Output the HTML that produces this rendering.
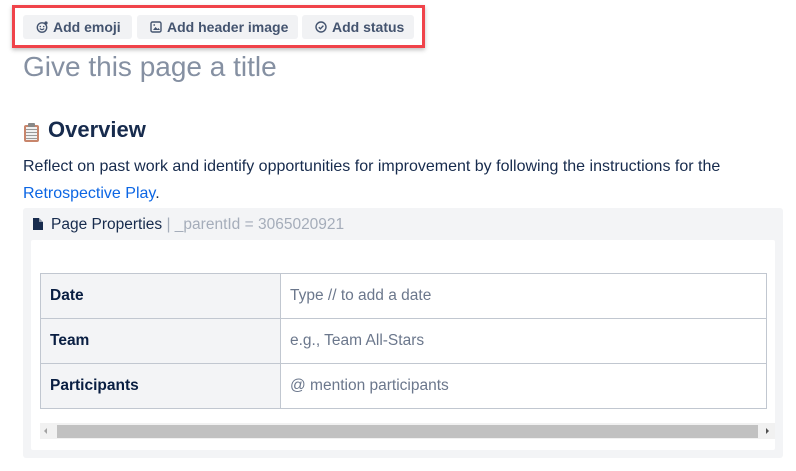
<!DOCTYPE html>
<html><head><meta charset="utf-8"><style>
*{margin:0;padding:0;box-sizing:border-box}
body{width:796px;height:471px;background:#fff;font-family:"Liberation Sans",sans-serif;position:relative;overflow:hidden;color:#172b4d}
.abs{position:absolute}
.red{left:12px;top:5px;width:413px;height:43px;border:3px solid #f0434a;box-shadow:0 2px 4px rgba(0,0,0,.25)}
.btn{position:absolute;top:15px;height:24px;background:#f1f2f4;border-radius:3px;font-size:14px;font-weight:bold;color:#44546f;line-height:24px;padding-left:12px;white-space:nowrap}
.btn svg{position:absolute;left:13px;top:6px}
.btn span{margin-left:18px}
.title{left:23px;top:51px;font-size:28px;color:#8590a2}
.h2{left:23px;top:117px;font-size:22px;font-weight:bold;color:#172b4d}
.p{left:23px;top:158px;font-size:16px;color:#172b4d}
.link{left:23px;top:185px;font-size:16px;color:#0c66e4}
.panel{left:23px;top:208px;width:760px;height:250px;background:#f3f4f6;border-radius:3px}
.inner{left:31px;top:240px;width:744px;height:210px;background:#fff;border-radius:2px}
table{position:absolute;left:40px;top:273px;width:727px;border-collapse:collapse}
td{border:1px solid #c1c7d0;height:45px;font-size:15.5px;padding-left:9px}
td.k{width:240px;background:#f3f4f6;font-weight:bold;color:#091e42}
td.v{color:#6b778c}
.sb{left:40px;top:423px;width:735px;height:16px;background:#f1f1f1}
.thumb{left:57px;top:425px;width:701px;height:13px;background:#c1c1c1}
</style></head><body>
<div class="abs red"></div>
<div class="btn" style="left:23px;width:109px"><svg width="12" height="12" viewBox="0 0 12 12"><circle cx="6" cy="6.5" r="4.7" fill="none" stroke="#44546f" stroke-width="1.4"/><circle cx="4.3" cy="5.5" r=".8" fill="#44546f"/><circle cx="7.7" cy="5.5" r=".8" fill="#44546f"/><path d="M3.8 7.6q2.2 2 4.4 0" stroke="#44546f" stroke-width="1.2" fill="none"/><circle cx="10" cy="2" r="1.6" fill="#44546f"/></svg><span>Add emoji</span></div>
<div class="btn" style="left:137px;width:161px"><svg width="12" height="12" viewBox="0 0 12 12"><rect x="1" y="1" width="10" height="10" rx="1.5" fill="none" stroke="#44546f" stroke-width="1.4"/><path d="M3 9l2.5-3 2 2 1-1 1.5 2z" fill="#44546f"/><circle cx="4.2" cy="4" r=".9" fill="#44546f"/></svg><span>Add header image</span></div>
<div class="btn" style="left:302px;width:112px"><svg width="12" height="12" viewBox="0 0 12 12"><circle cx="6" cy="6" r="5" fill="none" stroke="#44546f" stroke-width="1.4"/><path d="M3.8 6.2l1.6 1.6 3-3.2" fill="none" stroke="#44546f" stroke-width="1.4"/></svg><span>Add status</span></div>
<div class="abs title">Give this page a title</div>
<div class="abs h2"><span style="display:inline-block;width:17px;height:19px;vertical-align:-5px;margin-right:8px;position:relative"><span style="position:absolute;left:1px;top:2px;width:15px;height:17px;background:#c8856b;border-radius:2px"></span><span style="position:absolute;left:3px;top:4px;width:11px;height:13px;background:#f0f0f0;background-image:repeating-linear-gradient(#f0f0f0 0 2px,#999 2px 3px)"></span><span style="position:absolute;left:5px;top:0;width:7px;height:4px;background:#888;border-radius:1px"></span></span>Overview</div>
<div class="abs p">Reflect on past work and identify opportunities for improvement by following the instructions for the</div>
<div class="abs link">Retrospective Play<span style="color:#172b4d">.</span></div>
<div class="abs panel"></div>
<div class="abs" style="left:33px;top:216px;font-size:15.5px;color:#172b4d"><svg width="10" height="12" viewBox="0 0 10 12" style="margin-right:8px;vertical-align:-1px"><path d="M0 0h6l4 4v8H0z" fill="#172b4d"/><path d="M6 0v4h4" fill="#fff" opacity=".5"/></svg>Page Properties <span style="color:#a5adba">| _parentId = 3065020921</span></div>
<div class="abs inner"></div>
<table>
<tr><td class="k">Date</td><td class="v">Type // to add a date</td></tr>
<tr><td class="k" style="height:44px">Team</td><td class="v">e.g., Team All-Stars</td></tr>
<tr><td class="k">Participants</td><td class="v">@ mention participants</td></tr>
</table>
<div class="abs sb"></div>
<div class="abs thumb"></div>
<div class="abs" style="left:44px;top:428px;width:0;height:0;border-top:3px solid transparent;border-bottom:3px solid transparent;border-right:3px solid #a3a3a3"></div>
<div class="abs" style="left:766px;top:428px;width:0;height:0;border-top:3px solid transparent;border-bottom:3px solid transparent;border-left:3px solid #505050"></div>
</body></html>
